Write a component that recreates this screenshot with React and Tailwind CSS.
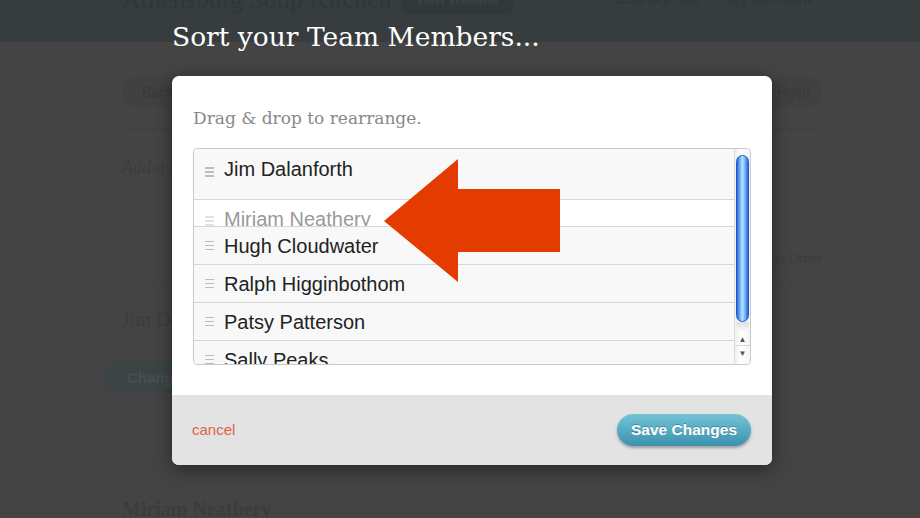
import React from 'react'

const serif = { fontFamily: '"Liberation Serif", Georgia, serif' }
const wideSerif = { fontFamily: '"DejaVu Serif", Georgia, serif' }
const sans = { fontFamily: '"Liberation Sans", Arial, sans-serif' }

const members = ['Hugh Cloudwater', 'Ralph Higginbothom', 'Patsy Patterson', 'Sally Peaks']

function Handle({ light }) {
  return (
    <div className="flex flex-col gap-[2.5px] w-[9px] mr-[10px]">
      <div className={light ? 'h-[1.5px] bg-[#e2e2e2]' : 'h-[1.5px] bg-[#bdbdbd]'} />
      <div className={light ? 'h-[1.5px] bg-[#e2e2e2]' : 'h-[1.5px] bg-[#bdbdbd]'} />
      <div className={light ? 'h-[1.5px] bg-[#e2e2e2]' : 'h-[1.5px] bg-[#bdbdbd]'} />
    </div>
  )
}

function Row({ name }) {
  return (
    <div className="h-[38px] shrink-0 border-t border-[#d6d6d6] bg-[#f8f8f8] flex items-center pl-[11px] text-[20px] leading-[36px] text-[#222]">
      <Handle />
      <span>{name}</span>
    </div>
  )
}

function Background() {
  return (
    <div className="w-[920px] h-[518px] bg-[#444444]">
      <div className="h-[42px] bg-[#373d3f] overflow-hidden">
        <div className="ml-[122px] w-[700px] flex items-start -mt-[20px]">
          <span className="text-[26px] text-[#30363a]" style={serif}>Athensburg Soup Kitchen</span>
          <span className="ml-[9px] mt-[4px] px-[14px] h-[30px] rounded-[8px] border border-[#30363a] bg-[#32383a] text-[13px] font-bold text-[#3c4244] leading-[30px]" style={sans}>View Website</span>
          <span className="ml-auto mt-[8px] text-[15px] font-bold text-[#31373a]" style={sans}>Edit My Site</span>
          <span className="ml-[26px] mt-[8px] mr-[10px] text-[15px] font-bold text-[#31373a]" style={sans}>My Account</span>
        </div>
      </div>
      <div className="ml-[122px] w-[700px]" style={sans}>
        <div className="flex justify-between mt-[35px]">
          <span className="h-[30px] px-[20px] rounded-full bg-[#414141] text-[14px] leading-[30px] text-[#393939]">Back</span>
          <span className="h-[30px] px-[12px] rounded-full bg-[#414141] text-[14px] leading-[30px] text-[#393939]">Help!</span>
        </div>
        <div className="mt-[22px] border-t border-[#3e3e3e]" />
        <div className="mt-[24px] text-[18px] italic text-[#3c3c3c]" style={serif}>Add a new Team Member</div>
        <div className="mt-[68px] text-right text-[13px] text-[#3c3c3c]">Change Order</div>
        <div className="mt-[14px] border-t border-[#404040]" />
        <div className="mt-[20px] text-[20px] text-[#3c3c3c]" style={serif}>Jim Dalanforth</div>
        <div className="mt-[8px] h-[128px] rounded-[6px] border border-[#424242] relative">
          <span className="absolute -left-[20px] top-[19px] h-[32px] w-[78px] rounded-full bg-[#3c4446] text-[15px] font-bold leading-[32px] pl-[24px] text-[#475053]">Change</span>
        </div>
        <div className="mt-[24px] text-[20px] font-bold text-[#3c3c3c]" style={serif}>Miriam Neathery</div>
      </div>
    </div>
  )
}

export default function App() {
  return (
    <div className="relative w-[920px] h-[518px] overflow-hidden">
      <Background />

      <div className="absolute inset-0">
        <h1 className="ml-[172px] mt-[19px] h-[36px] text-[26.5px] leading-[36px] text-white" style={wideSerif}>
          Sort your Team Members...
        </h1>

        <div className="ml-[172px] mt-[21px] w-[600px] h-[389px] rounded-[7px] overflow-hidden bg-white shadow-[0_4px_18px_rgba(0,0,0,0.45)] flex flex-col">
          <div className="flex-1 px-[21px] pt-[31px]">
            <p className="text-[17px] leading-[22px] text-[#888]" style={wideSerif}>Drag &amp; drop to rearrange.</p>

            <div className="mt-[19px] h-[217px] rounded-[4px] border border-[#c9c9c9] flex overflow-hidden" style={sans}>
              <div className="flex-1 flex flex-col overflow-hidden">
                <div className="h-[50px] shrink-0 bg-[#f8f8f8] flex items-start pl-[11px] pt-[2px] text-[20px] leading-[36px] text-[#222]">
                  <div className="mt-[16px]"><Handle /></div>
                  <span>Jim Dalanforth</span>
                </div>
                <div className="h-[27px] shrink-0 border-t border-[#d6d6d6] bg-white flex items-start pl-[11px] pt-[1px] text-[20px] leading-[36px] text-[#9a9a9a] overflow-hidden">
                  <div className="mt-[15px]"><Handle light /></div>
                  <span>Miriam Neathery</span>
                </div>
                {members.map((m) => (
                  <Row key={m} name={m} />
                ))}
              </div>

              <div className="w-[16px] shrink-0 border-l border-[#dcdcdc] bg-[linear-gradient(to_right,#eeeeee,#ffffff_40%,#f4f4f4)] flex flex-col items-center">
                <div className="mt-[6px] w-[13px] h-[167px] rounded-full border border-[#1d58c4] bg-[linear-gradient(to_right,#2a66d8,#7cb8ff_30%,#b5e0ff_50%,#7cb8ff_70%,#2a66d8)]" />
                <div className="w-[13px] h-[9px] rounded-b-full bg-[linear-gradient(to_bottom,#dedede,#f7f7f7)]" />
                <div className="mt-[3px] w-full h-[11px] flex items-center justify-center text-[8px] leading-none text-[#555]">▲</div>
                <div className="w-full border-t border-[#d8d8d8]" />
                <div className="mt-[2px] w-full h-[11px] flex items-center justify-center text-[8px] leading-none text-[#555]">▼</div>
              </div>
            </div>
          </div>

          <div className="h-[70px] bg-[#e3e3e3] flex items-center justify-between pl-[20px] pr-[21px]" style={sans}>
            <span className="text-[15px] text-[#d8634b]">cancel</span>
            <span className="h-[32px] px-[14px] rounded-full bg-[linear-gradient(to_bottom,#74c4d7,#3b92ad)] shadow-[0_2px_3px_rgba(0,0,0,0.3)] text-[15.5px] font-bold leading-[32px] text-white [text-shadow:0_-1px_0_rgba(0,0,0,0.25)]">
              Save Changes
            </span>
          </div>
        </div>

        <svg className="absolute left-[384px] top-[159px]" width="177" height="124" viewBox="0 0 177 124">
          <polygon points="0,62 74,0 74,30 176,30 176,93 74,93 74,123" fill="#e33b00" />
        </svg>
      </div>
    </div>
  )
}
